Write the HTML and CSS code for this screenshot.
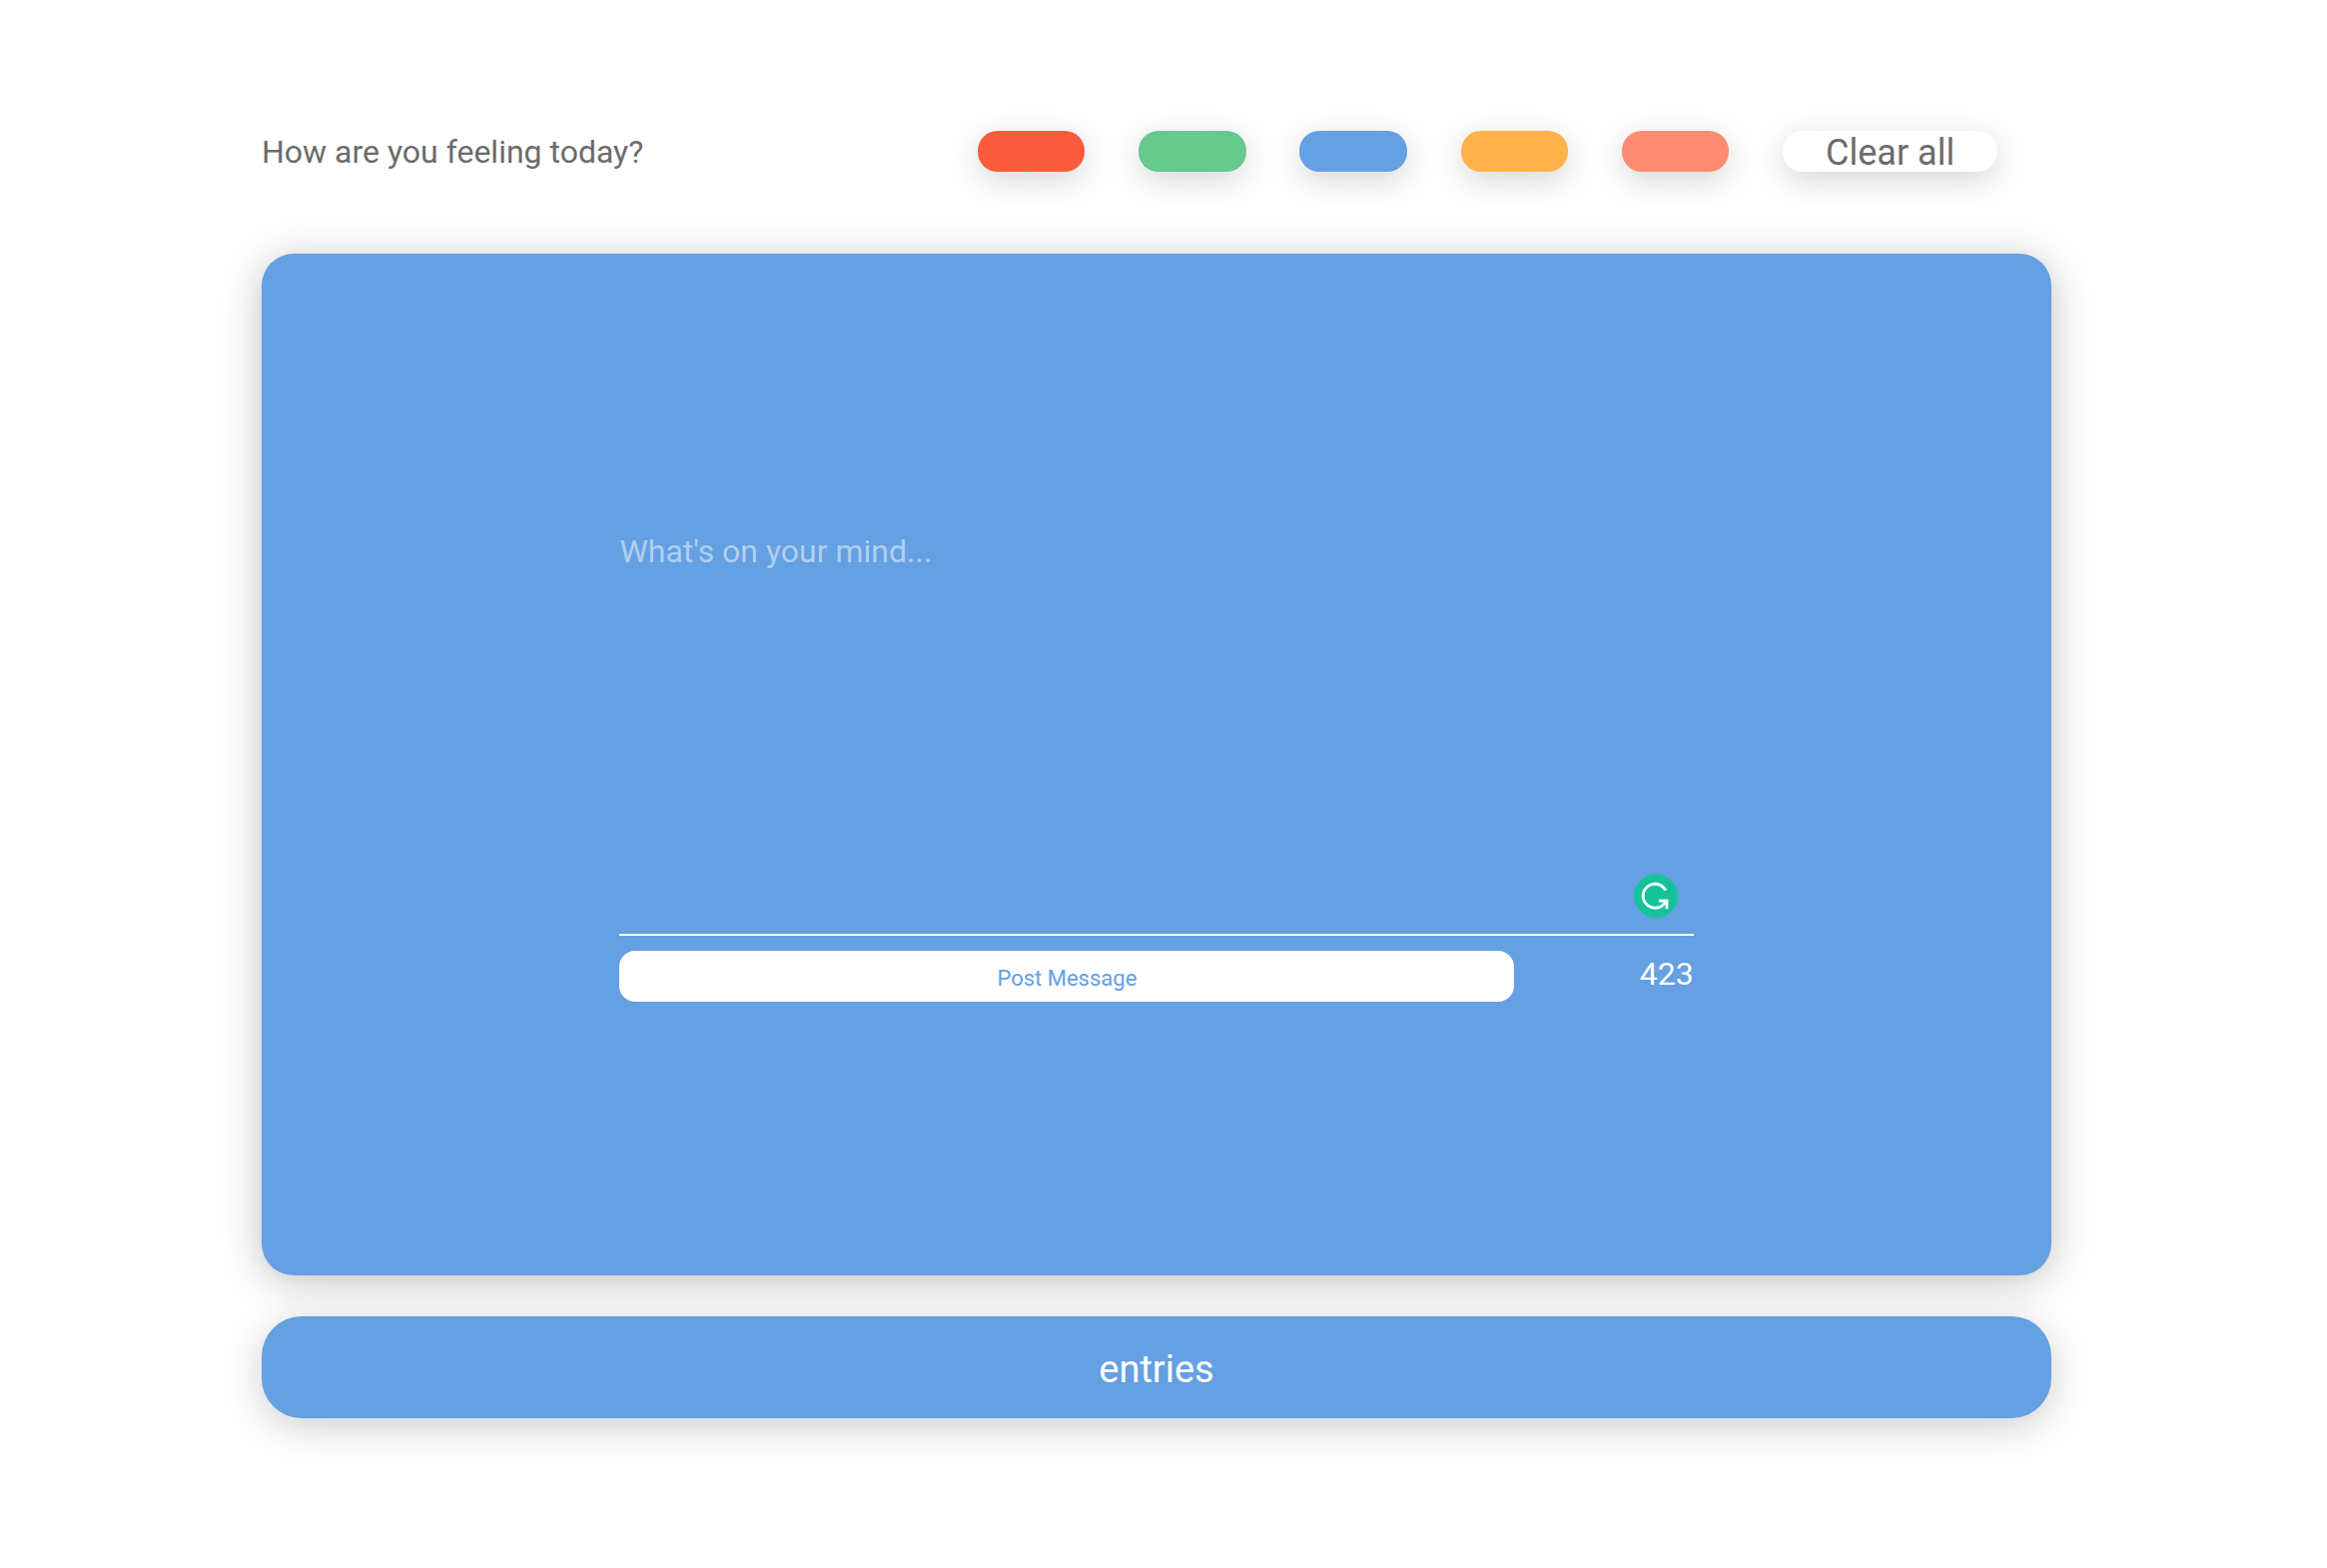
FILE: index.html
```html
<!DOCTYPE html>
<html lang="en">
<head>
<meta charset="utf-8">
<meta name="viewport" content="width=device-width, initial-scale=1">
<title>Mood journal</title>
<link rel="stylesheet" href="styles.css">
</head>
<body>
<main class="page">
  <header class="toolbar">
    <h1 class="question">How are you feeling today?</h1>
    <div class="moods">
      <button type="button" class="pill pill-red" aria-label="Angry"></button>
      <button type="button" class="pill pill-green" aria-label="Calm"></button>
      <button type="button" class="pill pill-blue" aria-label="Sad"></button>
      <button type="button" class="pill pill-orange" aria-label="Happy"></button>
      <button type="button" class="pill pill-coral" aria-label="Loved"></button>
      <button type="button" class="pill pill-clear">Clear all</button>
    </div>
  </header>
  <form class="card">
    <div class="field">
      <textarea class="message" aria-label="Message" placeholder="What's on your mind..."></textarea>
      <svg class="checker" viewBox="0 0 44 44" aria-hidden="true">
        <circle cx="22" cy="22" r="22" fill="#15c39a"/>
        <path d="M31.800 16.500A12 12 0 1 0 22 34Q28 34 32.500 27.500M25 27h8v8" fill="none" stroke="#fff" stroke-width="2.800"/>
      </svg>
    </div>
    <div class="actions">
      <button type="button" class="post">Post Message</button>
      <output class="count">423</output>
    </div>
  </form>
  <button type="button" class="entries">entries</button>
</main>
</body>
</html>
```
FILE: styles.css
```css
* {
  box-sizing: border-box;
}

body {
  margin: 0;
  background: #fff;
  font-family: Roboto, "Liberation Sans", sans-serif;
  font-size: 32px;
  line-height: 40px;
  color: #6b6b6b;
}

button,
textarea {
  font: inherit;
  border: 0;
  padding: 0;
}

button {
  cursor: pointer;
}

.page {
  margin: 0 276px 0 262px;
  padding: 131px 0 80px;
}

.toolbar {
  display: flex;
  align-items: center;
  margin-bottom: 82px;
}

.question {
  width: 40%;
  margin: 0;
  padding-top: 2px;
  font-size: 32px;
  font-weight: 400;
  line-height: 39px;
}

.moods {
  width: 60%;
  display: grid;
  grid-template-columns: repeat(5, 10%) 20%;
  column-gap: 5%;
}

.pill {
  height: 41px;
  border-radius: 20px;
  box-shadow: 0 8px 32px rgba(0, 0, 0, 0.17);
}

.pill-red { background: #fa5b3d; }
.pill-green { background: #66c98d; }
.pill-blue { background: #64a0e2; }
.pill-orange { background: #ffb24a; }
.pill-coral { background: #ff8b72; }

.pill-clear {
  background: #fff;
  color: #6b6b6b;
  font-size: 36px;
  line-height: 41px;
  padding-top: 2px;
}

.card {
  padding: 276px 20% 274px;
  border-radius: 32px;
  background: #64a0e2;
  box-shadow: 0 6px 40px rgba(0, 0, 0, 0.25);
}

.field {
  position: relative;
  margin-bottom: 15px;
}

.message {
  display: block;
  width: 100%;
  height: 407px;
  padding-top: 2px;
  border-bottom: 2px solid #fff;
  border-radius: 0;
  background: transparent;
  color: #fff;
  outline: 0;
  resize: none;
}

.message::placeholder {
  color: rgba(255, 255, 255, 0.5);
}

.checker {
  position: absolute;
  right: 16px;
  bottom: 18px;
  width: 44px;
  height: 44px;
}

.actions {
  display: flex;
  justify-content: space-between;
}

.post {
  width: 83.333%;
  height: 51px;
  padding-top: 4px;
  border-radius: 16px;
  background: #fff;
  color: #64a0e2;
  font-size: 22px;
  line-height: 28px;
}

.count {
  color: #fff;
  line-height: 46px;
}

.entries {
  display: block;
  width: 100%;
  height: 102px;
  margin-top: 41px;
  border-radius: 40px;
  background: #64a0e2;
  box-shadow: 0 8px 40px rgba(0, 0, 0, 0.2);
  color: #fff;
  font-size: 38px;
  padding-top: 4px;
}
```
